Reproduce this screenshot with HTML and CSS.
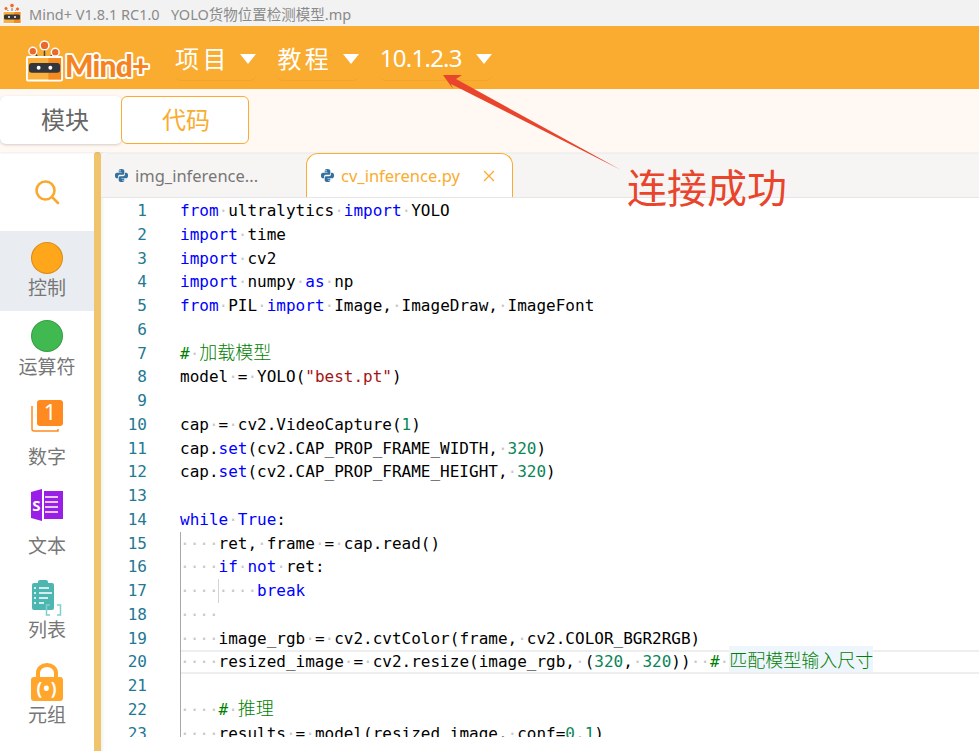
FILE: index.html
```html
<!DOCTYPE html>
<html lang="en">
<head>
<meta charset="UTF-8" />
<meta name="viewport" content="width=device-width, initial-scale=1" />
<title>Mind+</title>
<link rel="stylesheet" href="styles.css">
</head>
<body>
  <svg class="defs" width="0" height="0">
    <symbol id="robot" viewBox="0 0 40 44">
      <path class="robot-wire" d="M20 8V18M9 13L13 19M30 14L26 19"/>
      <circle class="robot-ball" cx="20" cy="7" r="4.5"/>
      <circle class="robot-ball" cx="8" cy="13" r="4"/>
      <circle class="robot-ball" cx="31" cy="14" r="4"/>
      <rect class="robot-body" x="2" y="19" width="36" height="24" rx="1"/>
      <path class="robot-side" d="M24 20H37V42H24Z"/>
      <rect class="robot-visor" x="4" y="25" width="32" height="10" rx="3"/>
      <circle class="robot-eye" cx="14" cy="30" r="2"/>
      <circle class="robot-eye" cx="26" cy="30" r="2"/>
    </symbol>
    <symbol id="python" viewBox="0 0 16 16">
      <path class="py" d="M7.9 1C5.4 1 5.1 2 5.1 3V4.500H8.100V5H3C1.800 5 1 6 1 8C1 10 1.800 11 3 11H4.300V9.300C4.300 8 5.300 7.300 6.300 7.300H9.500C10.400 7.300 11 6.600 11 5.800V3C11 1.900 10 1 7.900 1ZM6.400 2.200A.7 .7 0 1 1 6.400 3.600A.7 .7 0 1 1 6.400 2.200Z"/>
      <path class="py" d="M8.100 15C10.600 15 10.900 14 10.900 13V11.500H7.900V11H13C14.200 11 15 10 15 8C15 6 14.200 5 13 5H11.700V6.700C11.700 8 10.700 8.700 9.700 8.700H6.500C5.600 8.700 5 9.400 5 10.200V13C5 14.100 6 15 8.100 15ZM9.600 13.800A.7 .7 0 1 1 9.600 12.400A.7 .7 0 1 1 9.600 13.800Z"/>
    </symbol>
  </svg>

  <!-- Window title -->
  <div class="titlebar">
    <svg class="title-icon"><use href="#robot"/></svg>
    <span class="title-text">Mind+ V1.8.1 RC1.0&nbsp;&nbsp; YOLO货物位置检测模型.mp</span>
  </div>

  <!-- Orange menu bar -->
  <header class="menubar">
    <div class="logo">
      <svg class="logo-robot"><use href="#robot"/></svg>
      <svg class="logo-word" viewBox="0 0 86 30"><text x="1" y="25">Mind+</text></svg>
    </div>
    <nav class="menu">
      <div class="menu-item"><span class="spaced">项目</span><i class="caret"></i></div>
      <div class="menu-item"><span class="spaced">教程</span><i class="caret"></i></div>
      <div class="menu-item"><span class="version">10.1.2.3</span><i class="caret"></i></div>
    </nav>
  </header>

  <!-- Block / code switch -->
  <div class="modebar">
    <button class="mode">模块</button>
    <button class="mode mode-on">代码</button>
  </div>

  <div class="main">
    <aside class="sidebar">
      <div class="cat cat-search">
        <svg class="ico-search" viewBox="0 0 26 26"><circle cx="11.500" cy="11.500" r="9"/><path d="M18 18L24 24"/></svg>
      </div>
      <div class="cat cat-control">
        <i class="dot dot-orange"></i>
        <span>控制</span>
      </div>
      <div class="cat cat-op">
        <i class="dot dot-green"></i>
        <span>运算符</span>
      </div>
      <div class="cat cat-num">
        <svg class="ico" viewBox="0 0 32 32">
          <path class="num-back" d="M1 6V29Q1 31 3 31H27V29"/>
          <rect class="num-face" x="6" y="0" width="26" height="26" rx="3"/>
          <text class="num-text" x="19" y="20">1</text>
        </svg>
        <span>数字</span>
      </div>
      <div class="cat cat-text">
        <svg class="ico" viewBox="0 0 32 32">
          <path class="txt-fill" d="M0 3L11 0V32L0 29Z"/>
          <rect class="txt-fill" x="13" y="2" width="19" height="28"/>
          <path class="txt-lines" d="M14 8H27M14 13H27M14 18H27M14 23H27"/>
          <text class="txt-s" x="5.500" y="22">S</text>
        </svg>
        <span>文本</span>
      </div>
      <div class="cat cat-list">
        <svg class="ico ico-tall" viewBox="0 0 32 38">
          <rect class="list-fill" x="1" y="5" width="22" height="27" rx="2"/>
          <rect class="list-fill" x="7" y="2" width="10" height="5" rx="2"/>
          <path class="list-lines" d="M3 10H5M8 10H18M3 15H5M8 15H21M3 20H5M8 20H17M3 25H5M8 25H13"/>
          <path class="list-br" d="M19 27H15.500V37H19M26 27H29.500V37H26"/>
        </svg>
        <span>列表</span>
      </div>
      <div class="cat cat-tuple">
        <svg class="ico ico-tall" viewBox="0 0 32 38">
          <path class="lock-arc" d="M7 16V10A9 8 0 0 1 25 10V16"/>
          <rect class="lock-body" x="0" y="14" width="32" height="24" rx="3"/>
          <text class="lock-text" x="16" y="32">(•)</text>
        </svg>
        <span>元组</span>
      </div>
    </aside>
    <div class="sidebar-scroll"></div>

    <section class="editor">
      <div class="tabs">
        <div class="tab">
          <svg class="py-icon"><use href="#python"/></svg>
          <span>img_inference...</span>
        </div>
        <div class="tab tab-on">
          <svg class="py-icon"><use href="#python"/></svg>
          <span>cv_inference.py</span>
          <svg class="tab-close" viewBox="0 0 12 12"><path d="M1 1L11 11M11 1L1 11"/></svg>
        </div>
      </div>

      <div class="code">
        <div class="line"><b>1</b><code><em>from</em><u>·</u>ultralytics<u>·</u><em>import</em><u>·</u>YOLO</code></div>
        <div class="line"><b>2</b><code><em>import</em><u>·</u>time</code></div>
        <div class="line"><b>3</b><code><em>import</em><u>·</u>cv2</code></div>
        <div class="line"><b>4</b><code><em>import</em><u>·</u>numpy<u>·</u><em>as</em><u>·</u>np</code></div>
        <div class="line"><b>5</b><code><em>from</em><u>·</u>PIL<u>·</u><em>import</em><u>·</u>Image,<u>·</u>ImageDraw,<u>·</u>ImageFont</code></div>
        <div class="line"><b>6</b><code></code></div>
        <div class="line"><b>7</b><code><s>#<u>·</u><span class="cjk">加载模型</span></s></code></div>
        <div class="line"><b>8</b><code>model<u>·</u>=<u>·</u>YOLO(<q>"best.pt"</q>)</code></div>
        <div class="line"><b>9</b><code></code></div>
        <div class="line"><b>10</b><code>cap<u>·</u>=<u>·</u>cv2.VideoCapture(<var>1</var>)</code></div>
        <div class="line"><b>11</b><code>cap.<em>set</em>(cv2.CAP_PROP_FRAME_WIDTH,<u>·</u><var>320</var>)</code></div>
        <div class="line"><b>12</b><code>cap.<em>set</em>(cv2.CAP_PROP_FRAME_HEIGHT,<u>·</u><var>320</var>)</code></div>
        <div class="line"><b>13</b><code></code></div>
        <div class="line"><b>14</b><code><em>while</em><u>·</u><em>True</em>:</code></div>
        <div class="line"><b>15</b><code class="guide"><u>····</u>ret,<u>·</u>frame<u>·</u>=<u>·</u>cap.read()</code></div>
        <div class="line"><b>16</b><code class="guide"><u>····</u><em>if</em><u>·</u><em>not</em><u>·</u>ret:</code></div>
        <div class="line"><b>17</b><code class="guide guide-two"><u>········</u><em>break</em></code></div>
        <div class="line"><b>18</b><code class="guide"><u>····</u></code></div>
        <div class="line"><b>19</b><code class="guide"><u>····</u>image_rgb<u>·</u>=<u>·</u>cv2.cvtColor(frame,<u>·</u>cv2.COLOR_BGR2RGB)</code></div>
        <div class="line line-on"><b>20</b><code class="guide"><u>····</u>resized_image<u>·</u>=<u>·</u>cv2.resize(image_rgb,<u>·</u>(<var>320</var>,<u>·</u><var>320</var>))<u>··</u><s>#<u>·</u><span class="cjk cjk-mark">匹配模型输入尺寸</span></s></code></div>
        <div class="line"><b>21</b><code class="guide"></code></div>
        <div class="line"><b>22</b><code class="guide"><u>····</u><s>#<u>·</u><span class="cjk">推理</span></s></code></div>
        <div class="line"><b>23</b><code class="guide"><u>····</u>results<u>·</u>=<u>·</u>model(resized_image,<u>·</u>conf=<var>0.1</var>)</code></div>
      </div>
    </section>
  </div>

  <!-- Red annotation drawn over the screenshot -->
  <svg class="arrow" viewBox="0 0 979 751"><polygon points="443,75 462,75 456,79 621,170 451,84 453,89"/></svg>
  <div class="note">连接成功</div>
</body>
</html>
```

FILE: styles.css
```css
/* Mind+ code editor window */

html, body {
  margin: 0;
  height: 100%;
}

body {
  position: relative;
  display: flex;
  flex-direction: column;
  height: 751px;
  overflow: hidden;
  background-color: #fff;
  font-family: "Noto Sans", "Noto Sans CJK SC", sans-serif;
}

.defs {
  position: absolute;
}

/* Robot logo parts */
.robot-wire { fill: none; stroke: #444; stroke-width: 1.5; }
.robot-ball { fill: #ea6a2e; stroke: #fff; stroke-width: 1.5; }
.robot-body { fill: #fbb03b; stroke: #fff; stroke-width: 2; }
.robot-side { fill: #f58a1f; }
.robot-visor { fill: #33363c; }
.robot-eye { fill: #fff; }

/* Title bar */
.titlebar {
  display: flex;
  align-items: center;
  flex: 0 0 26px;
  background-color: #f2f2f2;
}

.title-icon {
  width: 20px;
  height: 22px;
  margin: 0 7px 0 2px;
}

.title-text {
  font-size: 14.5px;
  color: #8a8a8a;
  white-space: nowrap;
}

/* Menu bar */
.menubar {
  display: flex;
  align-items: center;
  flex: 0 0 63px;
  padding-left: 25px;
  background-color: #f9ac2f;
}

.logo {
  display: flex;
  align-items: flex-end;
  width: 150px;
  height: 46px;
  margin-top: 2px;
}

.logo-robot {
  width: 39px;
  height: 44px;
}

.logo-word {
  width: 86px;
  height: 30px;
  overflow: visible;
}

.logo-word text {
  font-family: "Lato", sans-serif;
  font-size: 30px;
  font-weight: 900;
  fill: #f5841f;
  stroke: #fff;
  stroke-width: 4px;
  paint-order: stroke;
  stroke-linejoin: round;
  letter-spacing: -0.8px;
}

.menu {
  display: flex;
  gap: 21px;
  margin-top: 5px;
}

.menu-item {
  display: flex;
  align-items: center;
  gap: 14px;
  padding-bottom: 5px;
  border-bottom: 1px solid rgba(180, 110, 0, 0.1);
  border-radius: 0 0 6px 6px;
  font-size: 24px;
  color: #fff;
}

.menu-item .spaced {
  letter-spacing: 3.4px;
  margin-right: -3.4px;
}

.menu-item .version {
  letter-spacing: -0.75px;
}

.caret {
  width: 0;
  height: 0;
  margin-top: 3px;
  border-left: 8px solid transparent;
  border-right: 8px solid transparent;
  border-top: 10px solid #fff;
}

/* Mode switch */
.modebar {
  position: relative;
  display: flex;
  flex: 0 0 63px;
  box-sizing: border-box;
  padding-top: 7px;
  background-color: #fff8f3;
  box-shadow: 0 1px 2px rgba(0, 0, 0, 0.08);
}

.mode {
  width: 122px;
  height: 48px;
  padding: 0 0 4px 8px;
  border: none;
  border-radius: 6px;
  background-color: #fff;
  box-shadow: 0 1px 3px rgba(0, 0, 0, 0.18);
  font-family: inherit;
  font-size: 24px;
  color: #666;
}

.mode-on {
  width: 128px;
  margin-left: -1px;
  padding-left: 2px;
  border: 1px solid #f9ac2f;
  box-shadow: none;
  color: #f9ac2f;
}

/* Main area */
.main {
  display: flex;
  flex: 1;
  min-height: 0;
}

.sidebar {
  flex: 0 0 94px;
  background-color: #fff;
}

.cat {
  display: flex;
  flex-direction: column;
  align-items: center;
  justify-content: flex-end;
  box-sizing: border-box;
  padding-bottom: 12px;
  font-size: 19px;
  line-height: 24px;
  color: #777;
}

.cat-search { height: 79px; justify-content: flex-start; padding-top: 27px; }
.cat-control { height: 80px; padding-bottom: 11px; background-color: #e9edf1; }
.cat-op { height: 80px; }
.cat-num { height: 90px; }
.cat-text { height: 89px; }
.cat-list { height: 84px; }
.cat-tuple { height: 85px; }

.ico-search {
  width: 26px;
  height: 26px;
}

.ico-search circle,
.ico-search path {
  fill: none;
  stroke: #faa92e;
  stroke-width: 2.6;
  stroke-linecap: round;
}

.dot {
  width: 32px;
  height: 32px;
  margin-bottom: 2px;
  box-sizing: border-box;
  border-radius: 50%;
  border: 1px solid rgba(0, 0, 0, 0.15);
}

.cat-op .dot { margin-bottom: 3px; }

.dot-orange { background-color: #ffa61a; }
.dot-green { background-color: #3fb950; }

.ico {
  width: 32px;
  height: 32px;
  margin-bottom: 13px;
  overflow: visible;
}

.ico-tall {
  height: 38px;
  margin-bottom: 2px;
}

.num-back { fill: none; stroke: #ff8a1f; stroke-width: 1.5; }
.num-face { fill: #ff8a1f; }
.num-text { fill: #fff; font-size: 22px; text-anchor: middle; }

.txt-fill { fill: #9a1fe6; }
.txt-lines { stroke: #fff; stroke-width: 1.500; }
.txt-s { fill: #fff; font-size: 15px; font-weight: 700; text-anchor: middle; }

.list-fill { fill: #4db6b0; }
.list-lines { stroke: #fff; stroke-width: 1.300; }
.list-br { fill: none; stroke: #7fd0cb; stroke-width: 1.500; }

.lock-arc { fill: none; stroke: #ffa62b; stroke-width: 4; }
.lock-body { fill: #ffa62b; }
.lock-text { fill: #fff; font-size: 17px; font-weight: 700; text-anchor: middle; letter-spacing: 1px; }

.sidebar-scroll {
  flex: 0 0 7px;
  border-radius: 3px 3px 0 0;
  background-color: #f0c36d;
}

/* Editor */
.editor {
  display: flex;
  flex-direction: column;
  flex: 1;
  min-width: 0;
  box-shadow: inset 4px 0 4px -3px rgba(0, 0, 0, 0.08);
}

.tabs {
  display: flex;
  flex: 0 0 44px;
  box-sizing: border-box;
  margin-top: 1px;
  border-bottom: 1px solid #e6e6e6;
  border-top-left-radius: 8px;
  background-color: #f6f5f4;
}

.tab {
  display: flex;
  align-items: center;
  width: 205px;
  box-sizing: border-box;
  padding-left: 13px;
  font-size: 16.5px;
  color: #777;
}

.tab-on {
  position: relative;
  width: 207px;
  height: 44px;
  border: 1px solid #f9ac2f;
  border-bottom: none;
  border-radius: 12px 12px 0 0;
  background-color: #fff;
  color: #f9ac2f;
}

.py-icon {
  flex: none;
  width: 15px;
  height: 15px;
  margin-right: 6px;
}

.py { fill: #34719f; fill-rule: evenodd; }

.tab-close {
  width: 12px;
  height: 12px;
  margin-left: 23px;
}

.tab-close path {
  fill: none;
  stroke: #f9ac2f;
  stroke-width: 1.3;
}

.code {
  height: 538px;
  overflow: hidden;
  padding-top: 1px;
  font-family: "DejaVu Sans Mono", monospace;
  font-size: 16px;
  line-height: 23.76px;
  color: #000;
}

.line {
  display: flex;
  height: 23.76px;
  white-space: pre;
}

.line b {
  flex: 0 0 46px;
  text-align: right;
  font-weight: 400;
  color: #237893;
}

.line code {
  flex: 1;
  margin-left: 33px;
  font: inherit;
}

.line em { font-style: normal; color: #0000ff; }
.line s { text-decoration: none; color: #008000; }
.line q { quotes: none; color: #a31515; }
.line var { font-style: normal; color: #098658; }
.line u { text-decoration: none; color: #c8c8c8; }

.cjk {
  font-family: "Noto Sans CJK SC", sans-serif;
  font-size: 18px;
  font-weight: 300;
  line-height: 1;
}

.cjk-mark {
  background-color: #eff5fd;
}

/* Indent guides sit on the code background, text does not move */
.guide {
  box-shadow: inset 1px 0 #a8a8a8;
}

.guide-two {
  background: linear-gradient(#d4d4d4, #d4d4d4) 38px 0 / 1px 100% no-repeat;
}

.line-on .guide {
  box-shadow: inset 1px 0 #a8a8a8, inset 0 2px #eee, inset 0 -2px #eee;
}

/* Annotation */
.arrow {
  position: absolute;
  left: 0;
  top: 0;
  width: 979px;
  height: 751px;
  pointer-events: none;
}

.arrow polygon {
  fill: #e8452c;
}

.note {
  position: absolute;
  left: 627px;
  top: 161px;
  font-size: 40px;
  line-height: 54px;
  font-weight: 400;
  color: #e8452c;
  white-space: nowrap;
}
```
